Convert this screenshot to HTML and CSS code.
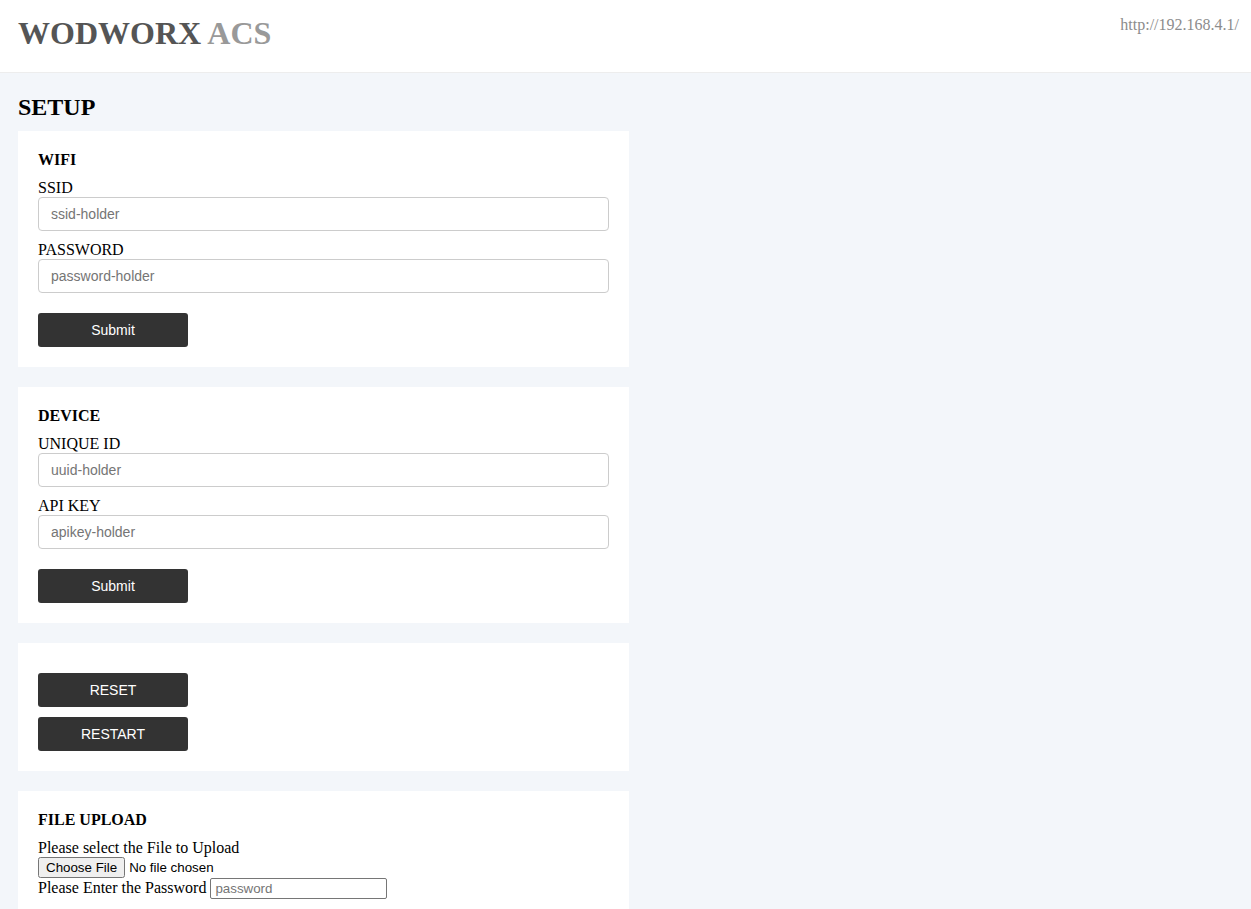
FILE: index.html
```html
<!DOCTYPE html>
<html lang="en">
<head>
<meta charset="utf-8">
<title>WODWORX ACS</title>
<link rel="stylesheet" href="styles.css">
</head>
<body>
<header class="topbar">
  <h1 class="brand"><span class="brand-main">WODWORX</span> <span class="brand-sub">ACS</span></h1>
  <div class="host">http://192.168.4.1/</div>
</header>
<main class="content">
  <h2 class="page-title">SETUP</h2>

  <section class="card">
    <h4 class="card-title">WIFI</h4>
    <label class="field-label">SSID</label>
    <input class="field" type="text" placeholder="ssid-holder">
    <label class="field-label">PASSWORD</label>
    <input class="field" type="text" placeholder="password-holder">
    <button class="btn btn-submit">Submit</button>
  </section>

  <section class="card">
    <h4 class="card-title">DEVICE</h4>
    <label class="field-label">UNIQUE ID</label>
    <input class="field" type="text" placeholder="uuid-holder">
    <label class="field-label">API KEY</label>
    <input class="field" type="text" placeholder="apikey-holder">
    <button class="btn btn-submit">Submit</button>
  </section>

  <section class="card card-actions">
    <button class="btn">RESET</button>
    <button class="btn">RESTART</button>
  </section>

  <section class="card card-upload">
    <h4 class="card-title">FILE UPLOAD</h4>
    <div class="upload-body">Please select the File to Upload<br><input type="file" class="file-input"><br>Please Enter the Password <input type="password" class="pw-input" placeholder="password"></div>
  </section>
</main>
</body>
</html>
```

FILE: styles.css
```css
html, body {
  margin: 0;
  padding: 0;
}

body {
  background: #f3f6fa;
  font-family: "Liberation Serif", "Times New Roman", serif;
  font-size: 16px;
  color: #000;
}

.topbar {
  box-sizing: border-box;
  height: 73px;
  background: #fff;
  border-bottom: 1px solid #ededed;
  display: flex;
  justify-content: space-between;
  align-items: flex-start;
  padding: 16px 12px 0 18px;
}

.brand {
  margin: 0;
  font-size: 32px;
  line-height: 37px;
  font-weight: bold;
  margin-top: -1px;
}

.brand-main {
  color: #555555;
}

.brand-sub {
  color: #999999;
}

.host {
  font-size: 16px;
  line-height: 18px;
  color: #8c8c8c;
}

.content {
  padding: 20px 18px 0 18px;
}

.page-title {
  margin: 0 0 10px 0;
  font-size: 24px;
  line-height: 28px;
  font-weight: bold;
}

.card {
  box-sizing: border-box;
  width: 611px;
  background: #fff;
  padding: 20px;
  margin-bottom: 20px;
  display: flex;
  flex-direction: column;
  align-items: flex-start;
}

.card-title {
  margin: 0 0 10px 0;
  font-size: 16px;
  line-height: 18px;
  font-weight: bold;
}

.field-label {
  display: block;
  font-size: 16px;
  line-height: 18px;
}

.field {
  box-sizing: border-box;
  width: 100%;
  height: 34px;
  margin: 0 0 10px 0;
  padding: 0 12px;
  border: 1px solid #cccccc;
  border-radius: 4px;
  font-family: "Liberation Sans", Arial, sans-serif;
  font-size: 14px;
  color: #333;
  background: #fff;
}

.field::placeholder {
  color: #757575;
}

.btn {
  box-sizing: border-box;
  width: 150px;
  height: 34px;
  margin: 0;
  border: none;
  border-radius: 3px;
  background: #333333;
  color: #ffffff;
  font-family: "Liberation Sans", Arial, sans-serif;
  font-size: 14px;
  padding: 0;
}

.btn-submit {
  margin-top: 10px;
}

.card-actions {
  padding-top: 30px;
  gap: 10px;
}

.card-upload {
  display: block;
}

.upload-body {
  line-height: 18px;
}

.file-input {
  font-family: "Liberation Sans", Arial, sans-serif;
  font-size: 13.333px;
  margin: 0;
}

.pw-input {
  font-family: "Liberation Sans", Arial, sans-serif;
  font-size: 13.333px;
  width: 177px;
  box-sizing: border-box;
  height: 21px;
  padding: 1px 4px;
  border: 1px solid #767676;
  border-radius: 2px;
  margin: 0;
}

.pw-input::placeholder {
  color: #757575;
}
```
